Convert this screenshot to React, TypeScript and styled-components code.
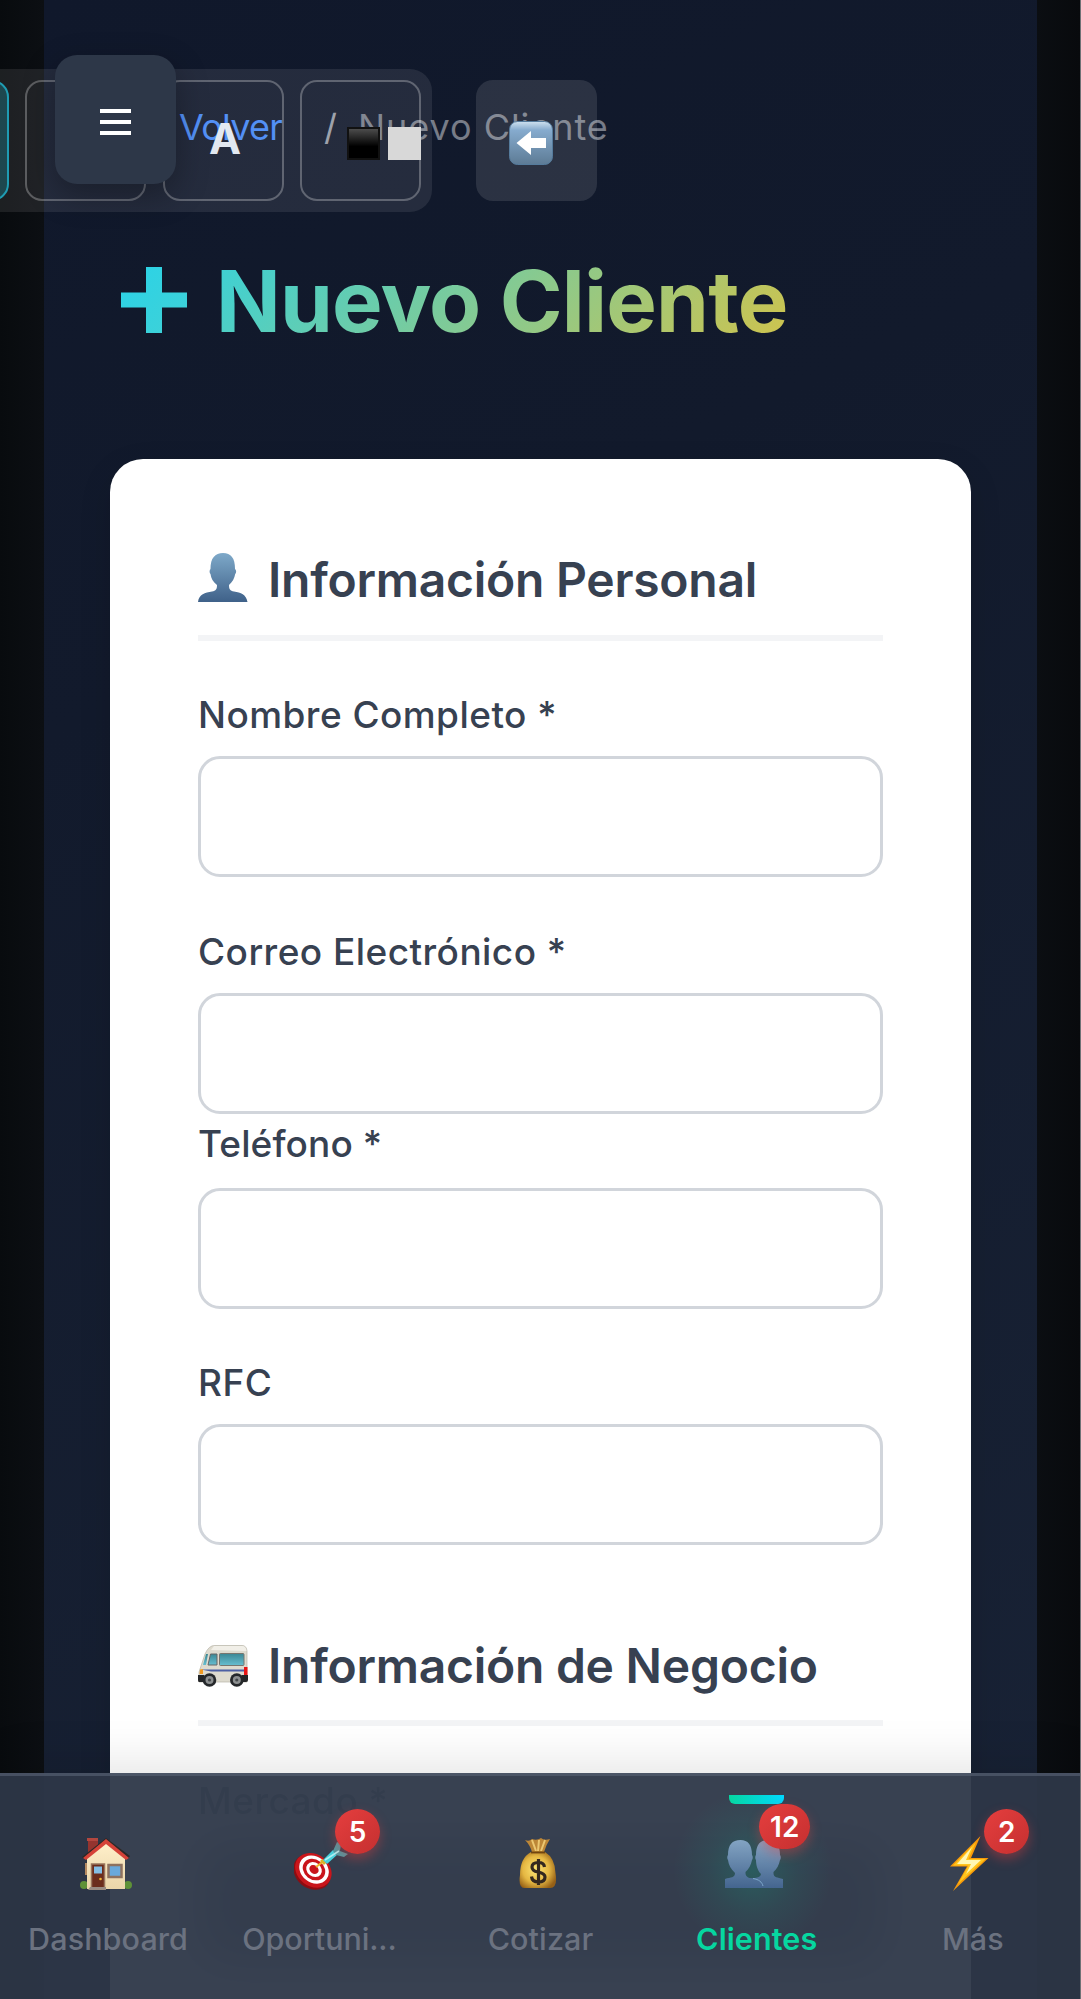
import React from "react";
import styled, { createGlobalStyle, css } from "styled-components";

const GlobalStyle = createGlobalStyle`
  *, *::before, *::after { box-sizing: border-box; }
  html, body { margin: 0; padding: 0; background: #0a0d11; }
  body { font-family: Inter, "Liberation Sans", sans-serif; overflow: hidden; }
  button, input { font: inherit; }
`;

const Screen = styled.div`
  position: relative;
  height: 1999px;
  padding: 0 44px;
  overflow: hidden;
  border-right: 1px solid #6f7276;
  background: linear-gradient(90deg, #080b0e 0, #0c0f13 44px, #0b0e12 1036px, #080a0d 1080px);
`;

const Page = styled.main`
  height: 1999px;
  padding: 99px 66px 0;
  margin-right: -1px;
  background: linear-gradient(155deg, #10182b 0%, #121a2c 30%, #192336 100%);
`;

const Breadcrumb = styled.nav`
  display: flex;
  height: 56px;
  padding-left: 69px;
  font-size: 36px;
  line-height: 56px;
  color: #777c88;
  white-space: nowrap;
`;

const BackLink = styled.a`
  width: 145px;
  color: #4386f5;
  letter-spacing: -0.75px;
`;

const Slash = styled.span`
  width: 34px;
  color: #959aa4;
`;

const Current = styled.span`
  letter-spacing: 0.95px;
`;

const Title = styled.h1`
  display: flex;
  align-items: center;
  gap: 29px;
  height: 106px;
  margin: 94px 0 104px;
  padding-left: 11px;
  font-size: 85px;
  font-weight: 700;
  line-height: 106px;
  letter-spacing: -0.8px;
  white-space: nowrap;
  color: transparent;
  background: linear-gradient(135deg, #22d3ee 0%, #fbbf24 100%);
  -webkit-background-clip: text;
  background-clip: text;
`;

const PlusMark = styled.svg`
  display: block;
  width: 66px;
  height: 66px;
  margin-top: -4px;
`;

const Card = styled.section`
  height: 1620px;
  margin-top: 0.3px;
  padding: 90.7px 88px 0;
  border-radius: 33px;
  background: #fff;
  box-shadow: 0 11px 33px rgba(0, 0, 0, 0.12);
  color: #374151;
`;

const SectionTitle = styled.h2<{ $top?: number }>`
  display: flex;
  align-items: center;
  height: 91px;
  margin: ${(p) => p.$top ?? 0}px 0 49.6px;
  padding-bottom: 24.5px;
  border-bottom: 6px solid #f3f4f6;
  font-size: 48px;
  font-weight: 600;
  line-height: 60px;
  letter-spacing: -0.25px;
  white-space: nowrap;
`;

const TitleIcon = styled.span<{ $lift: number }>`
  display: flex;
  align-items: center;
  width: 70px;
  height: 60px;
  padding-bottom: ${(p) => p.$lift}px;
  flex: none;
`;

const Field = styled.label<{ $after?: number; $gap?: number; $faint?: boolean }>`
  display: grid;
  row-gap: ${(p) => p.$gap ?? 16}px;
  margin-bottom: ${(p) => p.$after ?? 49.5}px;
  opacity: ${(p) => (p.$faint ? 0.45 : 1)};
`;

const FieldName = styled.span<{ $tight?: boolean }>`
  height: 50px;
  font-size: 37px;
  font-weight: 500;
  line-height: 50px;
  letter-spacing: ${(p) => (p.$tight ? 0.1 : 0.45)}px;
  white-space: nowrap;
`;

const TextInput = styled.input`
  display: block;
  width: 100%;
  height: 121px;
  padding: 0 33px;
  border: 3px solid #d1d5db;
  border-radius: 22px;
  background: #fff;
  outline: none;
`;

const MarketSelect = styled.div`
  height: 121px;
  border-radius: 22px;
  background: #3c434f;
  filter: blur(24px);
`;

const Toolbar = styled.div`
  position: absolute;
  top: 69px;
  right: 648px;
  z-index: 2;
  display: flex;
  gap: 16.8px;
  padding: 11px;
  border-radius: 22px;
  background: rgba(255, 255, 255, 0.085);
`;

const ToolButton = styled.button<{ $active?: boolean }>`
  display: flex;
  align-items: center;
  justify-content: center;
  gap: 8px;
  width: 120.7px;
  height: 121px;
  padding: 0;
  border: 2.8px solid rgba(255, 255, 255, 0.27);
  border-radius: 17px;
  background: transparent;
  color: #e2e8f0;
  font-size: 43px;
  font-weight: 700;
  line-height: 50px;
  ${(p) =>
    p.$active &&
    css`
      border-color: #1f9cb2;
      background: rgba(34, 211, 238, 0.22);
    `}
`;

const Letter = styled.span`
  padding: 0 0 6px 4px;
`;

const ContrastSwatches = styled.span`
  display: flex;
  flex: none;
  gap: 8px;
  margin: 6px 0 0 47px;
`;

const Swatch = styled.i<{ $dark?: boolean }>`
  width: 33px;
  height: 33px;
  flex: none;
  background: ${(p) => (p.$dark ? "linear-gradient(#4c4c4c, #000 60%)" : "#d8d8d8")};
  border: ${(p) => (p.$dark ? "2px solid #111" : "0")};
`;

const ReturnButton = styled.button`
  position: absolute;
  top: 80px;
  left: 476px;
  z-index: 2;
  display: flex;
  align-items: center;
  justify-content: center;
  width: 121px;
  height: 121px;
  padding: 5px 12px 0 0;
  border: 0;
  border-radius: 17px;
  background: rgba(255, 255, 255, 0.11);
`;

const MenuButton = styled.button`
  position: absolute;
  top: 55px;
  left: 55px;
  z-index: 3;
  display: flex;
  flex-direction: column;
  align-items: center;
  justify-content: center;
  gap: 7px;
  width: 121px;
  height: 129px;
  padding: 5px 0 0;
  border: 0;
  border-radius: 22px;
  background: #2d3748;
  box-shadow: 0 11px 33px rgba(0, 0, 0, 0.3);
`;

const MenuLine = styled.i`
  width: 31px;
  height: 4px;
  background: #fff;
`;

const TabBar = styled.nav`
  position: absolute;
  left: 0;
  bottom: 0;
  z-index: 3;
  display: grid;
  grid-template-columns: repeat(5, 1fr);
  width: 1081px;
  height: 226px;
  border-top: 3px solid rgba(90, 100, 118, 0.6);
  background: rgba(45, 55, 72, 0.95);
  box-shadow: 0 -11px 44px rgba(0, 0, 0, 0.1);
`;

const Tab = styled.a<{ $active?: boolean }>`
  position: relative;
  display: flex;
  flex-direction: column;
  align-items: center;
  padding-top: 55.5px;
  color: ${(p) => (p.$active ? "#06d6a0" : "#6b7280")};
  font-weight: ${(p) => (p.$active ? 600 : 500)};

  ${(p) =>
    p.$active &&
    css`
      &::before {
        content: "";
        position: absolute;
        top: 19px;
        left: 80px;
        width: 55px;
        height: 9px;
        border-radius: 0 0 6px 6px;
        background: linear-gradient(90deg, #06d6a0, #00d9ff);
      }
      &::after {
        content: "";
        position: absolute;
        top: 14px;
        left: 24px;
        width: 160px;
        height: 160px;
        z-index: -1;
        background: radial-gradient(closest-side, rgba(6, 214, 160, 0.2), rgba(6, 214, 160, 0.07) 55%, transparent);
      }
    `}
`;

const TabIcon = styled.span<{ $shift?: number; $drop?: number }>`
  display: flex;
  align-items: center;
  justify-content: center;
  height: 64px;
  padding-top: ${(p) => p.$drop ?? 0}px;
  margin-left: ${(p) => p.$shift ?? 0}px;
`;

const TabLabel = styled.span<{ $clipped?: boolean }>`
  margin-top: 23px;
  width: ${(p) => (p.$clipped ? "164px" : "auto")};
  font-size: 30.5px;
  line-height: 40px;
  letter-spacing: ${(p) => (p.$clipped ? "-0.1px" : "0.1px")};
  white-space: nowrap;
`;

const Badge = styled.span<{ $left: number; $top: number }>`
  position: absolute;
  top: ${(p) => p.$top}px;
  left: ${(p) => p.$left}px;
  min-width: 45px;
  height: 45px;
  padding: 0 11px;
  border-radius: 23px;
  background: linear-gradient(135deg, #e53e3e, #c53030);
  box-shadow: 0 5px 12px rgba(229, 62, 62, 0.4);
  color: #fff;
  font-size: 28px;
  font-weight: 600;
  line-height: 46px;
  text-align: center;
`;

const PERSON =
  "M0 49C1 41 7 39.5 14 38.5C18 38 19 36 19 32C15 29 13 25 12.5 21C11.3 20 11.3 17 12.5 16C12.5 5 17 0 25 0C33 0 37 5 37 16C38.5 17 38.5 20 37.2 21C36.5 25 34.5 29 31 32C31 36 32 38 36 38.5C43 39.5 48 41 49.5 49Z";

const PersonIcon = () => (
  <svg width="50" height="49" viewBox="0 0 50 49">
    <defs>
      <linearGradient id="person" x1="0" y1="0" x2="0" y2="1">
        <stop offset="0" stopColor="#7ea9c9" />
        <stop offset="1" stopColor="#3f6189" />
      </linearGradient>
    </defs>
    <path d={PERSON} fill="url(#person)" />
  </svg>
);

const PeopleIcon = () => (
  <svg width="58" height="48" viewBox="0 0 58 48">
    <defs>
      <linearGradient id="people" x1="0" y1="0" x2="0" y2="1">
        <stop offset="0" stopColor="#83a4c3" />
        <stop offset="1" stopColor="#44658f" />
      </linearGradient>
    </defs>
    <path d="M20 48V39C25 38 36 39 36 34C32 30 31 24 31 20C30 19 30 16 31 15C31 5 35 0 43 0C51 0 55 5 55 15C56 16 56 19 55 20C54 25 52 29 48.5 32C48 38 52 37 58 39V48Z" fill="url(#people)" />
    <path d="M0 48V39C6 37 10 38 10 33C6 29 3.5 25 3 20C2 19 2 16 3 15C3 5 7 0 15.500 0C23 0 27 5 27 15C28 16 28 19 27 20C26 25 24 29 20.500 32C20 38 25 38 30 39C36 41 38 44 38 48Z" fill="url(#people)" />
    <path d="M28 38.500C34 39.500 37 42 38 46" fill="none" stroke="#7fa9cc" strokeWidth="1" />
  </svg>
);

const VanIcon = () => (
  <svg width="50" height="42" viewBox="0 0 50 42">
    <defs>
      <linearGradient id="glass" x1="0" y1="0" x2="0" y2="1">
        <stop offset="0" stopColor="#3b8794" />
        <stop offset="1" stopColor="#67bed0" />
      </linearGradient>
    </defs>
    <path d="M1 27L7 9Q11 0 17 .5H44Q48.500 .5 49 6V37H1Z" fill="#dedbcf" stroke="#b8b5a8" strokeWidth=".7" />
    <path d="M16 1H44Q48 1 48.500 6L13 5Z" fill="#f1efe8" />
    <path d="M5 20L8 9H10L8 20Z" fill="url(#glass)" />
    <path d="M10 20L12.500 9H19V20Z" fill="url(#glass)" stroke="#666" />
    <rect x="21.500" y="8.500" width="24.500" height="12" rx="1" fill="url(#glass)" stroke="#77766f" />
    <path d="M3 24.500H47V26.500H13Z" fill="#4d60a4" />
    <path d="M2 24.500L5 24V29H1.500Z" fill="#f19a22" />
    <path d="M46 22H49.500V30H46Z" fill="#e91515" />
    <path d="M0 30H6V37H1Q0 37 0 35ZM44 30H50V35Q50 37 48 37H44Z" fill="#242628" />
    {[11.5, 38.8].map((cx) => (
      <g key={cx}>
        <circle cx={cx} cy="35" r="6.800" fill="#25282b" />
        <circle cx={cx} cy="35" r="4" fill="#8d9091" />
        <circle cx={cx} cy="35" r="1.600" fill="#45494b" />
      </g>
    ))}
  </svg>
);

const HouseIcon = () => (
  <svg width="52" height="52" viewBox="0 0 52 52">
    <defs>
      <linearGradient id="wall" x1="0" y1="0" x2="0" y2="1">
        <stop offset="0" stopColor="#fff0cb" />
        <stop offset="1" stopColor="#ead5a9" />
      </linearGradient>
    </defs>
    <path d="M8 0H18V10L8 18Z" fill="#94342f" />
    <path d="M7 0H18V3H7Z" fill="#b2473f" />
    <circle cx="4" cy="47" r="4" fill="#5e9137" />
    <circle cx="48" cy="47" r="4" fill="#5e9137" />
    <path d="M7 20L26 4L45 20V51H7Z" fill="url(#wall)" />
    <path d="M5 37V25H7V37Z" fill="#b58a61" />
    <path d="M26 0L50 18L48 21L26 4L4 21L2 19Z" fill="#2c2826" />
    <path d="M26 1L49 20L46 22L26 6L6 22L3 20Z" fill="#d54238" />
    <rect x="11.500" y="26" width="13" height="24" fill="#6b2d1d" stroke="#98755d" strokeWidth="1.500" />
    <rect x="14" y="28.500" width="8" height="7" fill="#84bee5" />
    <circle cx="20.500" cy="41" r="1.300" fill="#f2b535" />
    <rect x="28.500" y="27" width="13" height="12" fill="#69a9db" stroke="#8e725f" strokeWidth="2.500" />
    <path d="M10 49H26V52H8Z" fill="#998b82" />
  </svg>
);

const TargetIcon = () => (
  <svg width="55" height="48" viewBox="0 0 55 48">
    <g transform="rotate(38 19 28)">
      <ellipse cx="19.500" cy="30" rx="20" ry="16.500" fill="#8d0d12" />
      <ellipse cx="19.500" cy="28" rx="19.500" ry="16" fill="#c9151b" />
      <ellipse cx="19.500" cy="27" rx="15.800" ry="13" fill="#fff" />
      <ellipse cx="19.500" cy="27" rx="12" ry="10" fill="#c9151b" />
      <ellipse cx="19.500" cy="27" rx="8.300" ry="7" fill="#fff" />
      <ellipse cx="19.500" cy="27" rx="5" ry="4" fill="#c9151b" />
    </g>
    <path d="M22 25L31 18" stroke="#eeb52d" strokeWidth="2" />
    <path d="M27 18L31 22" stroke="#d8b52a" strokeWidth="3" />
    <path d="M29 18L39 8L44 12L33 22Z" fill="#45d3df" />
    <path d="M39 9L43 0L47 2L46 9L54 12L50 15L42 13Z" fill="#4c9ba4" />
    <path d="M31 18L45 9" stroke="#b0f1f4" strokeWidth="1.500" />
  </svg>
);

const MoneyBagIcon = () => (
  <svg width="38" height="51" viewBox="0 0 38 51">
    <defs>
      <radialGradient id="sack" cx=".45" cy=".5" r=".6">
        <stop offset="0" stopColor="#ffe675" />
        <stop offset=".6" stopColor="#e5b742" />
        <stop offset="1" stopColor="#966016" />
      </radialGradient>
    </defs>
    <path d="M6 2Q10 4 13 1Q18 3 22 0Q25 3 31 1Q27 7 25 14H13Q11 7 6 2Z" fill="#bd8737" />
    <path d="M13 2L17 13M20 2L19 13M26 2L22 13" stroke="#ecc771" strokeWidth="2" />
    <path d="M12 14Q19 12 26 14Q36 20 36.500 35Q39 50 31 50H6Q-1 50 1 37Q1 20 12 14Z" fill="url(#sack)" />
    <path d="M12 14.500H26" stroke="#714510" strokeWidth="1.800" />
    <path d="M25.500 29Q25 24.500 19.500 24.500Q13 24.500 13 29Q13 33 19 34Q26 35.500 26 39Q26 44 19.500 44Q13 44 12.500 38.500M19.500 21V47" fill="none" stroke="#34281f" strokeWidth="3.200" />
  </svg>
);

const BoltIcon = () => (
  <svg width="39" height="55" viewBox="0 0 39 55">
    <path d="M30.500 0L0 30.500H17L3 55L38.500 22H21Z" fill="#f79a0a" />
    <path d="M26 6L3 29.500H18.500L8 48L35.500 23H18.500Z" fill="#ffc51d" />
    <path d="M22 11L7 28H21L16 38L31 24H16Z" fill="#fff7b4" />
  </svg>
);

const ArrowTile = () => (
  <svg width="44" height="44" viewBox="0 0 44 44">
    <defs>
      <linearGradient id="tile" x1="0" y1="0" x2="0" y2="1">
        <stop offset="0" stopColor="#cfe1ef" />
        <stop offset=".2" stopColor="#86abce" />
        <stop offset="1" stopColor="#5d7b95" />
      </linearGradient>
    </defs>
    <rect x=".5" y=".5" width="43" height="43" rx="8" fill="url(#tile)" stroke="#557b9c" />
    <path d="M7.500 22L22 10V17H37V27H22V34Z" fill="#fff" />
  </svg>
);

type TabItem = {
  label: string;
  icon: React.ReactNode;
  shift: number;
  drop?: number;
  active?: boolean;
  clipped?: boolean;
  badge?: { text: string; left: number; top: number };
};

const TABS: TabItem[] = [
  { label: "Dashboard", icon: <HouseIcon />, shift: -5 },
  {
    label: "Oportuni...",
    icon: <TargetIcon />,
    shift: -5,
    drop: 4,
    clipped: true,
    badge: { text: "5", left: 118.8, top: 33 },
  },
  { label: "Cotizar", icon: <MoneyBagIcon />, shift: -5 },
  {
    label: "Clientes",
    icon: <PeopleIcon />,
    shift: -5,
    active: true,
    badge: { text: "12", left: 110.5, top: 27.5 },
  },
  { label: "Más", icon: <BoltIcon />, shift: -6, badge: { text: "2", left: 119.5, top: 33 } },
];

export default function App() {
  return (
    <>
      <GlobalStyle />
      <Screen>
        <Page>
          <Breadcrumb>
            <BackLink>Volver</BackLink>
            <Slash>/</Slash>
            <Current>Nuevo Cliente</Current>
          </Breadcrumb>
          <Title>
            <PlusMark viewBox="0 0 66 66">
              <defs>
                <linearGradient id="plus" x1="0" y1="0" x2="1" y2="1">
                  <stop offset="0" stopColor="#2ad3e8" />
                  <stop offset="1" stopColor="#40d1d6" />
                </linearGradient>
              </defs>
              <path d="M25 0H41V25.500H66V40.500H41V66H25V40.500H0V25.500H25Z" fill="url(#plus)" />
            </PlusMark>
            Nuevo Cliente
          </Title>
          <Card>
            <SectionTitle>
              <TitleIcon $lift={5}>
                <PersonIcon />
              </TitleIcon>
              Información Personal
            </SectionTitle>
            <Field>
              <FieldName>Nombre Completo *</FieldName>
              <TextInput />
            </Field>
            <Field $after={5.7}>
              <FieldName>Correo Electrónico *</FieldName>
              <TextInput />
            </Field>
            <Field $gap={18.5}>
              <FieldName $tight>Teléfono *</FieldName>
              <TextInput />
            </Field>
            <Field $after={0}>
              <FieldName>RFC</FieldName>
              <TextInput />
            </Field>
            <SectionTitle $top={90}>
              <TitleIcon $lift={0}>
                <VanIcon />
              </TitleIcon>
              Información de Negocio
            </SectionTitle>
            <Field as="div" $faint>
              <FieldName>Mercado *</FieldName>
              <MarketSelect />
            </Field>
          </Card>
        </Page>

        <Toolbar>
          <ToolButton $active />
          <ToolButton />
          <ToolButton>
            <Letter>A</Letter>
          </ToolButton>
          <ToolButton>
            <ContrastSwatches>
              <Swatch $dark />
              <Swatch />
            </ContrastSwatches>
          </ToolButton>
        </Toolbar>
        <ReturnButton>
          <ArrowTile />
        </ReturnButton>
        <MenuButton>
          <MenuLine />
          <MenuLine />
          <MenuLine />
        </MenuButton>

        <TabBar>
          {TABS.map((tab) => (
            <Tab key={tab.label} $active={tab.active}>
              <TabIcon $shift={tab.shift} $drop={tab.drop}>
                {tab.icon}
              </TabIcon>
              <TabLabel $clipped={tab.clipped}>{tab.label}</TabLabel>
              {tab.badge && (
                <Badge $left={tab.badge.left} $top={tab.badge.top}>
                  {tab.badge.text}
                </Badge>
              )}
            </Tab>
          ))}
        </TabBar>
      </Screen>
    </>
  );
}
